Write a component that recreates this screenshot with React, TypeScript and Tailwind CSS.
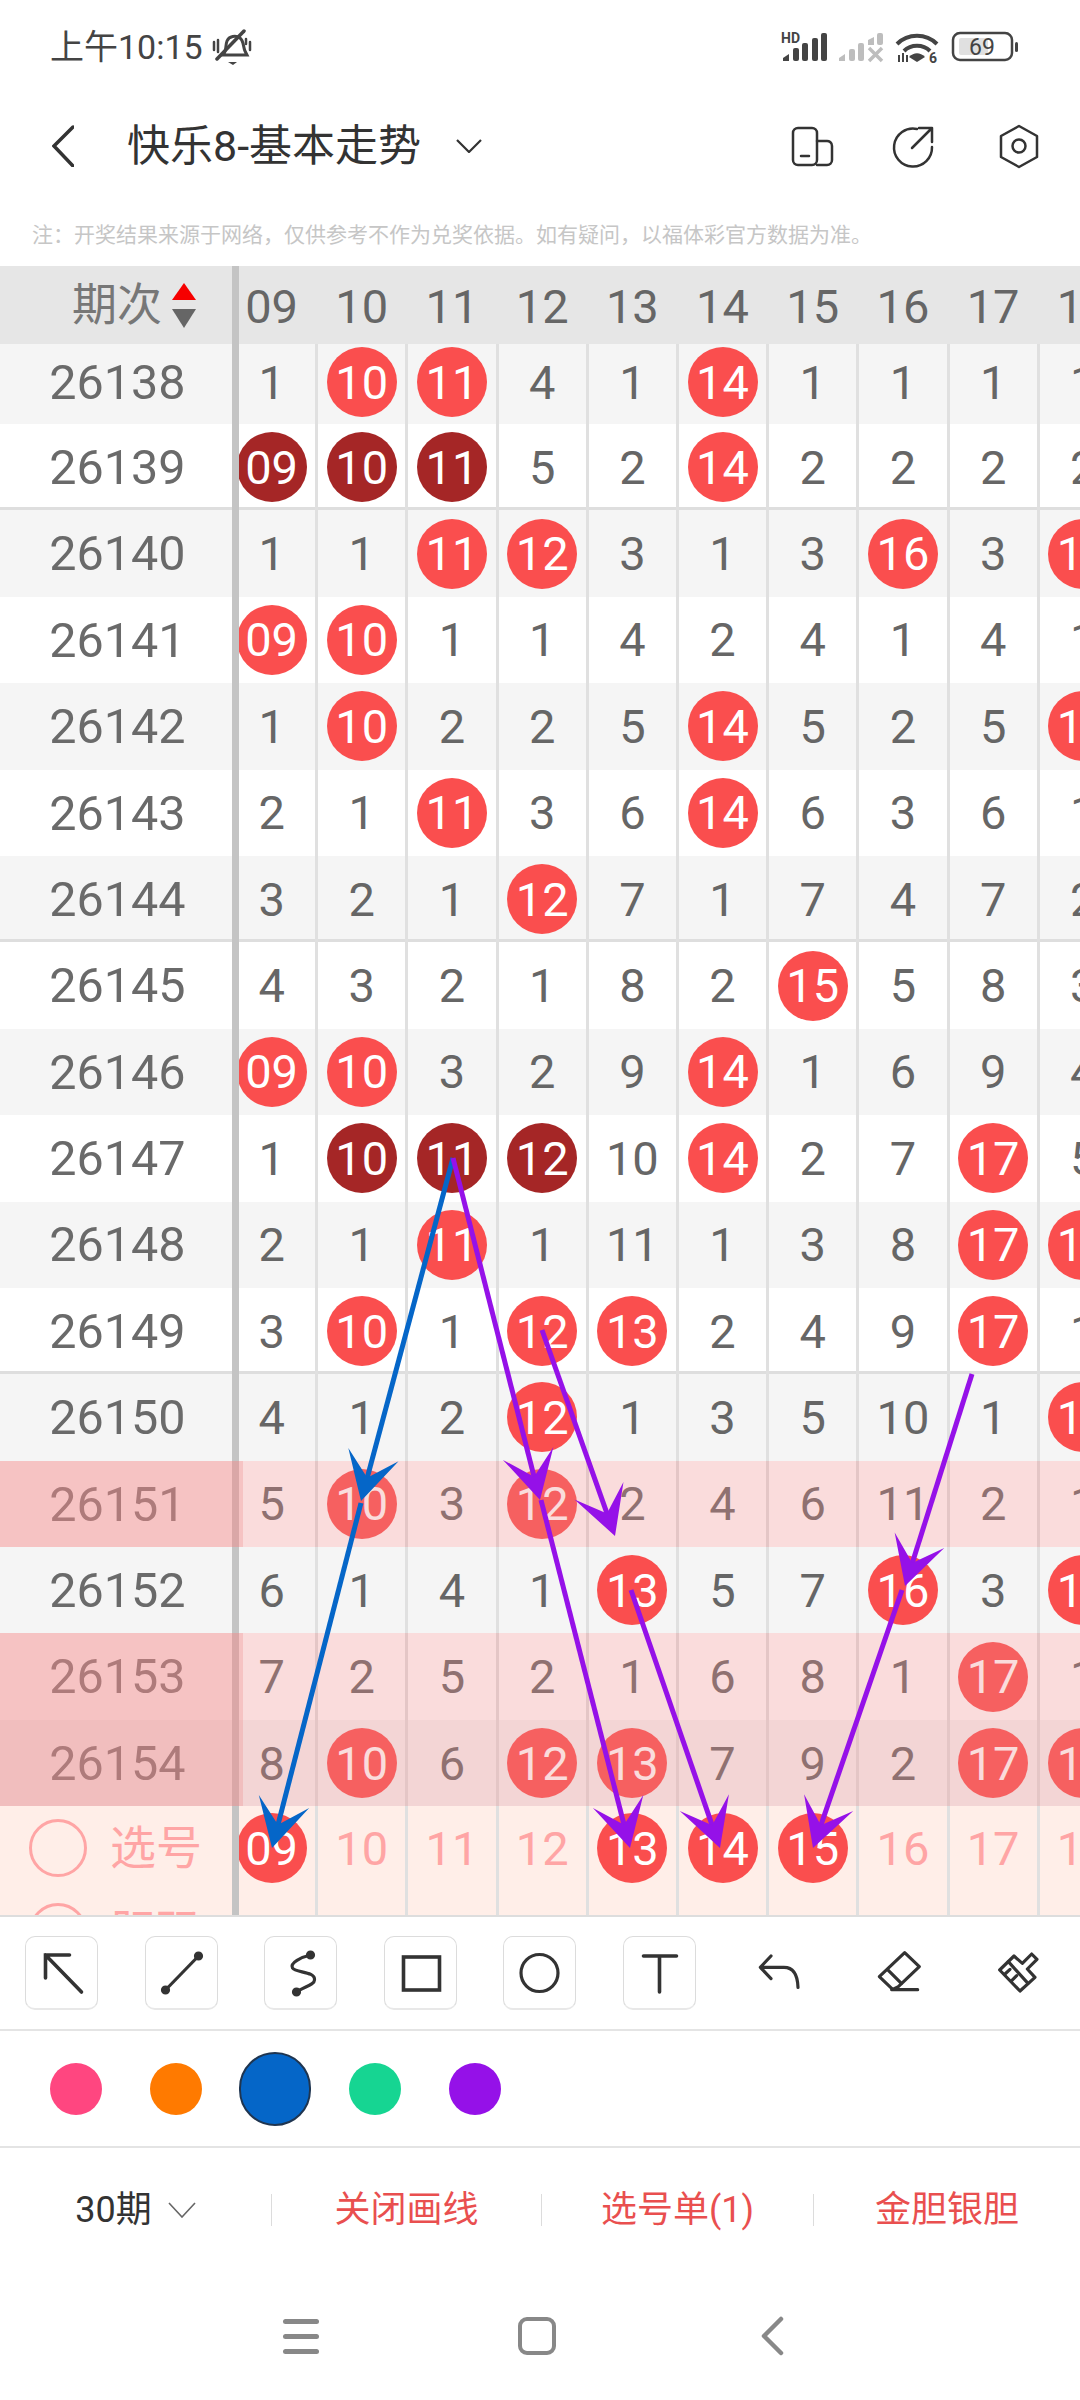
import { Fragment } from 'react'

const COLUMNS = ['09', '10', '11', '12', '13', '14', '15', '16', '17', '18']

// full width colon and comma are written as escapes on purpose
const NOTE = '注\uFF1A开奖结果来源于网络\uFF0C仅供参考不作为兑奖依据。如有疑问\uFF0C以福体彩官方数据为准。'

// b = red ball, d = dark ball (repeat number), plain = missed count
const ROWS = [
  { id: '26138', cells: ['1', 'b10', 'b11', '4', '1', 'b14', '1', '1', '1', '1'] },
  { id: '26139', cells: ['d09', 'd10', 'd11', '5', '2', 'b14', '2', '2', '2', '2'], sep: true },
  { id: '26140', cells: ['1', '1', 'b11', 'b12', '3', '1', '3', 'b16', '3', 'b18'] },
  { id: '26141', cells: ['b09', 'b10', '1', '1', '4', '2', '4', '1', '4', '1'] },
  { id: '26142', cells: ['1', 'b10', '2', '2', '5', 'b14', '5', '2', '5', 'b18'] },
  { id: '26143', cells: ['2', '1', 'b11', '3', '6', 'b14', '6', '3', '6', '1'] },
  { id: '26144', cells: ['3', '2', '1', 'b12', '7', '1', '7', '4', '7', '2'], sep: true },
  { id: '26145', cells: ['4', '3', '2', '1', '8', '2', 'b15', '5', '8', '3'] },
  { id: '26146', cells: ['b09', 'b10', '3', '2', '9', 'b14', '1', '6', '9', '4'] },
  { id: '26147', cells: ['1', 'd10', 'd11', 'd12', '10', 'b14', '2', '7', 'b17', '5'] },
  { id: '26148', cells: ['2', '1', 'b11', '1', '11', '1', '3', '8', 'b17', 'b18'] },
  { id: '26149', cells: ['3', 'b10', '1', 'b12', 'b13', '2', '4', '9', 'b17', '1'], sep: true },
  { id: '26150', cells: ['4', '1', '2', 'b12', '1', '3', '5', '10', '1', 'b18'] },
  { id: '26151', cells: ['5', 'b10', '3', 'b12', '2', '4', '6', '11', '2', '1'], tint: true },
  { id: '26152', cells: ['6', '1', '4', '1', 'b13', '5', '7', 'b16', '3', 'b18'] },
  { id: '26153', cells: ['7', '2', '5', '2', '1', '6', '8', '1', 'b17', '1'], tint: true },
  { id: '26154', cells: ['8', 'b10', '6', 'b12', 'b13', '7', '9', '2', 'b17', 'b18'], tint: true },
]

const PICKED = ['09', '13', '14', '15']

// page coordinates of the hand drawn lines: [fromX, fromY, toX, toY]
const BLUE_LINES = [
  [453, 1158, 361, 1501],
  [361, 1503, 272, 1848],
]
const PURPLE_LINES = [
  [453, 1158, 540, 1500],
  [541, 1500, 630, 1848],
  [542, 1330, 615, 1536],
  [631, 1590, 720, 1848],
  [972, 1374, 905, 1586],
  [902, 1590, 813, 1848],
]

const SWATCHES = [
  { color: 'bg-[#ff4680]', size: 'w-[52px] h-[52px]' },
  { color: 'bg-[#ff7a00]', size: 'w-[52px] h-[52px]' },
  { color: 'bg-[#0566c8] border-2 border-[#1f3550]', size: 'w-[72px] h-[74px]' },
  { color: 'bg-[#16d592]', size: 'w-[52px] h-[52px]' },
  { color: 'bg-[#9511e8]', size: 'w-[52px] h-[52px]' },
]

function Ball({ text, dark }: { text: string; dark?: boolean }) {
  return (
    <span
      className={`flex w-[70px] h-[70px] shrink-0 items-center justify-center rounded-full text-white ${
        dark ? 'bg-[#a52626]' : 'bg-[#fa4e4e]'
      }`}
    >
      {text}
    </span>
  )
}

function Cell({ value }: { value: string }) {
  const kind = value[0]
  return (
    <div className="flex w-[90.2px] h-full shrink-0 items-center justify-center border-r-[3px] border-[#e0e0e0]">
      {kind === 'b' && <Ball text={value.slice(1)} />}
      {kind === 'd' && <Ball text={value.slice(1)} dark />}
      {kind !== 'b' && kind !== 'd' && value}
    </div>
  )
}

function Row({ row, index }: { row: (typeof ROWS)[number]; index: number }) {
  const first = index === 0
  return (
    <div className={`relative overflow-hidden ${first ? 'h-[80px]' : 'h-[86.4px]'}`}>
      <div
        className={`flex h-[86.4px] ${first ? '-mt-[5px]' : ''} ${index % 2 === 0 ? 'bg-[#f5f5f5]' : 'bg-white'} ${
          row.sep ? 'shadow-[inset_0_-3px_0_#dedede]' : ''
        }`}
      >
        <div className="flex w-[239px] shrink-0 items-center justify-center border-r-[7px] border-[#c4c4c4] pl-[3px] pt-[2px] text-[48.5px] text-[#6a6a6a]">
          {row.id}
        </div>
        <div className="flex-1 overflow-hidden">
          <div className="flex h-full -ml-[11px]">
            {row.cells.map((value, i) => (
              <Cell key={i} value={value} />
            ))}
          </div>
        </div>
      </div>
      {row.tint && (
        <>
          <div className="absolute inset-0 bg-[#ee8a8a]/30" />
          <div className="absolute inset-y-0 left-0 w-[243px] bg-[#ee8a8a]/30" />
        </>
      )}
    </div>
  )
}

function Arrow({ line, color }: { line: number[]; color: string }) {
  const [x1, y1, x2, y2] = line
  const len = Math.hypot(x2 - x1, y2 - y1)
  const ux = (x2 - x1) / len
  const uy = (y2 - y1) / len
  const at = (back: number, side: number) => `${x2 - ux * back - uy * side},${y2 - uy * back + ux * side}`
  return (
    <g>
      <line x1={x1} y1={y1} x2={x2 - ux * 20} y2={y2 - uy * 20} stroke={color} strokeWidth={5} />
      <polygon points={`${x2},${y2} ${at(48, 26)} ${at(24, 0)} ${at(48, -26)}`} fill={color} />
    </g>
  )
}

function StatusIcons() {
  return (
    <svg width="340" height="94" viewBox="740 0 340 94" className="shrink-0">
      <text x="781" y="43" fontSize="14" fontWeight="700" fill="#444" fontFamily="Roboto, sans-serif">
        HD
      </text>
      <g fill="#444">
        <path d="M783 61v-3l6-4v7z" />
        <rect x="793" y="48" width="6" height="13" rx="2" />
        <rect x="802" y="43" width="6" height="18" rx="2" />
        <rect x="812" y="38" width="6" height="23" rx="2" />
        <rect x="821" y="33" width="6" height="28" rx="2" />
      </g>
      <g fill="#bdbdbd">
        <path d="M839 61v-3l6-4v7z" />
        <rect x="849" y="49" width="6" height="12" rx="2" />
        <rect x="858" y="43" width="6" height="18" rx="2" />
        <path d="M868 45v-5l6-3v8z" />
        <rect x="877" y="33" width="6" height="12" rx="2" />
        <path d="M869 48l13 13M882 48l-13 13" stroke="#bdbdbd" strokeWidth="3.5" fill="none" />
      </g>
      <g fill="none" stroke="#444" strokeWidth="4">
        <path d="M897 44c11-11 29-11 40 0" />
        <path d="M904 51c7-7 19-7 26 0" />
      </g>
      <path d="M909 57c5-5 11-5 16 0l-8 5z" fill="#444" />
      <path d="M899 55v7M903 53v9M907 55v7" stroke="#444" strokeWidth="2" />
      <text x="929" y="63" fontSize="14" fontWeight="700" fill="#444" fontFamily="Roboto, sans-serif">
        6
      </text>
      <rect x="953" y="33" width="59" height="27" rx="7" fill="none" stroke="#444" strokeWidth="2.5" />
      <rect x="959" y="38" width="29" height="17" rx="2" fill="#e0e0e0" />
      <text x="982" y="55" textAnchor="middle" fontSize="23" fill="#444" fontFamily="Roboto, sans-serif">
        69
      </text>
      <rect x="1015" y="42" width="3" height="10" rx="1.5" fill="#444" />
    </svg>
  )
}

function HeaderIcons() {
  return (
    <svg width="340" height="60" viewBox="740 117 340 60" className="shrink-0">
      <g fill="none" stroke="#333" strokeWidth="2.5" strokeLinecap="round" strokeLinejoin="round">
        <rect x="793" y="129" width="24" height="37" rx="5" />
        <path d="M817 142h9a5 5 0 0 1 6 5v14a5 5 0 0 1-5 5h-10" />
        <path d="M801 157h8" />
        <path d="M917 130A19 19 0 1 0 932 148" />
        <path d="M912 149l20-20M919 129h13v14" />
        <path d="M1019 127l18 10v21l-18 10-18-10v-21z" />
        <circle cx="1019" cy="147" r="6.5" />
      </g>
    </svg>
  )
}

function ToolButton({ children }: { children: React.ReactNode }) {
  return (
    <div className="flex justify-center">
      <div className="w-[73px] h-[74px] rounded-[10px] border border-[#dcdcdc] border-b-2 border-b-[#e8e8e8] bg-white">
        <svg width="71" height="71" viewBox="0 0 70 71" fill="none" stroke="#333" strokeWidth="3.2" strokeLinecap="round">
          {children}
        </svg>
      </div>
    </div>
  )
}

function FreeTool({ box, children }: { box: string; children: React.ReactNode }) {
  return (
    <div className="flex items-center justify-center">
      <svg width="60" height="60" viewBox={box} fill="none" stroke="#333" strokeWidth="9.5" strokeLinecap="round" strokeLinejoin="round">
        {children}
      </svg>
    </div>
  )
}

export default function App() {
  return (
    <div className="relative flex flex-col w-[1080px] h-[2400px] overflow-hidden bg-white font-[Roboto,'Noto_Sans_CJK_SC',sans-serif]">
      {/* Status bar */}
      <div className="flex h-[94px] items-center justify-between">
        <div className="flex items-center pl-[50px] text-[34px] leading-none text-[#444]">
          <span>上午10:15</span>
          <svg width="42" height="36" viewBox="0 0 42 36" className="ml-[8px]">
            <g fill="none" stroke="#444" strokeLinecap="round">
              <path d="M12 26c4-4 2-9 4-14 2-5 9-6 13-3 4 3 3 9 5 13l2 4z" strokeWidth="3" />
              <path d="M6 30L33 2" strokeWidth="3.5" />
              <path d="M3 13v8M7 11v12M39 13v8M35 10v5" strokeWidth="2.5" />
            </g>
            <path d="M17 33h9l-4 3z" fill="#444" />
          </svg>
        </div>
        <StatusIcons />
      </div>

      {/* Title bar */}
      <div className="flex h-[104px] items-center justify-between">
        <div className="flex items-center">
          <svg width="22" height="42" viewBox="0 0 22 42" className="ml-[52px]" fill="none" stroke="#333" strokeWidth="3.5" strokeLinecap="round">
            <path d="M21 2L2 21l19 20" />
          </svg>
          <span className="ml-[53px] text-[43px] leading-none text-[#333]">快乐8-基本走势</span>
          <svg width="26" height="14" viewBox="0 0 26 14" className="ml-[35px]" fill="none" stroke="#333" strokeWidth="2.2">
            <path d="M1 1l12 12L25 1" />
          </svg>
        </div>
        <HeaderIcons />
      </div>

      {/* Note */}
      <div className="h-[68px] pl-[32px] pt-[23px] text-[21px] leading-[28px] text-[#c6c6c6]">{NOTE}</div>

      {/* Trend table */}
      <div className="h-[1651px] shrink-0 overflow-hidden border-b-2 border-[#dddddd] text-[47px] leading-none text-[#666]">
        <div className="flex h-[78px] bg-[#e6e6e6]">
          <div className="flex w-[239px] shrink-0 items-center border-r-[7px] border-[#c4c4c4] pl-[72px] text-[#777]">
            <span className="text-[45px]">期次</span>
            <span className="ml-[10px] flex flex-col gap-[9px]">
              <span className="h-0 w-0 border-x-[12px] border-b-[17px] border-x-transparent border-b-[#f60000]" />
              <span className="h-0 w-0 border-x-[12px] border-t-[19px] border-x-transparent border-t-[#666]" />
            </span>
          </div>
          <div className="flex-1 overflow-hidden">
            <div className="flex h-full -ml-[11px] pt-[2px]">
              {COLUMNS.map((col) => (
                <div key={col} className="flex w-[90.2px] shrink-0 items-center justify-center pr-[3px]">
                  {col}
                </div>
              ))}
            </div>
          </div>
        </div>

        {ROWS.map((row, i) => (
          <Row key={row.id} row={row} index={i} />
        ))}

        {/* Number picking rows, the second one is cut off by the toolbar */}
        {['选号', '胆码'].map((label, r) => (
          <div key={label} className="flex h-[84px] bg-[#ffeee8] text-[#ffa5a5]">
            <div className="flex w-[239px] shrink-0 items-center border-r-[7px] border-[#c4c4c4] pl-[29px]">
              <span className="h-[58px] w-[58px] shrink-0 rounded-full border-[3.5px] border-[#ffa5a5]" />
              <span className="ml-[23px] text-[46px]">{label}</span>
            </div>
            <div className="flex-1 overflow-hidden">
              <div className="flex h-full -ml-[11px]">
                {COLUMNS.map((col) => (
                  <Fragment key={col}>
                    <Cell value={r === 0 && PICKED.includes(col) ? `b${col}` : col} />
                  </Fragment>
                ))}
              </div>
            </div>
          </div>
        ))}
      </div>

      {/* Drawing tools */}
      <div className="grid h-[114px] grid-cols-9 items-center border-b-2 border-[#e4e4e4] px-[2px]">
        <ToolButton>
          <path d="M19 41V18h24M19 18l36 37" strokeWidth="3.6" />
        </ToolButton>
        <ToolButton>
          <path d="M19 53L52 19" />
          <circle cx="19" cy="53" r="3" fill="#333" />
          <circle cx="52" cy="19" r="3" fill="#333" />
        </ToolButton>
        <ToolButton>
          <path d="M45 18C36 20 24 26 27 31C30 36 50 34 49 43C49 48 38 50 31 55" />
          <circle cx="45" cy="18" r="3" fill="#333" />
          <circle cx="31" cy="55" r="3" fill="#333" />
        </ToolButton>
        <ToolButton>
          <rect x="18" y="20" width="36" height="33" strokeWidth="3.6" />
        </ToolButton>
        <ToolButton>
          <circle cx="35" cy="36" r="18.5" />
        </ToolButton>
        <ToolButton>
          <path d="M19 19h33M35 19v36" strokeWidth="3.6" />
        </ToolButton>
        <FreeTool box="60 39 180 180">
          <path d="M126 78L94 112L126 146M94 112H165Q205 112 207 172" />
        </FreeTool>
        <FreeTool box="417 39 180 180">
          <path d="M524 68L568 110L505 170L488 178L448 140Z" />
          <path d="M472 118L514 160M485 179H563" />
        </FreeTool>
        <FreeTool box="777 39 180 180">
          <path d="M855 78L880 100L908 72L924 88L895 117L918 142L873 183L812 120Z" />
          <path d="M838 95L897 160M828 132L843 118M848 152L863 137" />
        </FreeTool>
      </div>

      {/* Pen colours */}
      <div className="flex h-[117px] items-center border-b-2 border-[#e4e4e4] pl-[26px]">
        {SWATCHES.map((swatch) => (
          <div key={swatch.color} className="flex w-[99.7px] shrink-0 justify-center">
            <span className={`block rounded-full ${swatch.color} ${swatch.size}`} />
          </div>
        ))}
      </div>

      {/* Bottom actions */}
      <div className="flex h-[124px] items-center text-[36px] leading-none text-[#e94f4f]">
        <div className="flex w-[271px] items-center justify-center text-[#333]">
          <span>30期</span>
          <svg width="28" height="16" viewBox="0 0 28 16" className="ml-[16px]" fill="none" stroke="#666" strokeWidth="1.6">
            <path d="M1 1l13 14L27 1" />
          </svg>
        </div>
        <div className="h-[32px] w-px bg-[#dcdcdc]" />
        <div className="w-[269px] text-center">关闭画线</div>
        <div className="h-[32px] w-px bg-[#dcdcdc]" />
        <div className="w-[271px] text-center">选号单(1)</div>
        <div className="h-[32px] w-px bg-[#dcdcdc]" />
        <div className="flex-1 text-center">金胆银胆</div>
      </div>

      {/* Navigation bar */}
      <div className="flex flex-1 items-center pl-[283px]">
        <div className="flex w-[36px] flex-col gap-[10px]">
          <span className="h-[5px] rounded-full bg-[#888]" />
          <span className="h-[5px] rounded-full bg-[#888]" />
          <span className="h-[5px] rounded-full bg-[#888]" />
        </div>
        <div className="ml-[199px] h-[38px] w-[38px] rounded-[9px] border-[4.5px] border-[#888]" />
        <svg width="24" height="40" viewBox="0 0 24 40" className="ml-[204px]" fill="none" stroke="#888" strokeWidth="4.5" strokeLinecap="round" strokeLinejoin="round">
          <path d="M21 3L4 20l17 17" />
        </svg>
      </div>

      {/* Lines the user drew on top of the table */}
      <svg className="pointer-events-none absolute left-0 top-0" width="1080" height="1917" viewBox="0 0 1080 1917">
        {BLUE_LINES.map((line, i) => (
          <Arrow key={i} line={line} color="#0566c8" />
        ))}
        {PURPLE_LINES.map((line, i) => (
          <Arrow key={i} line={line} color="#9511e8" />
        ))}
      </svg>
    </div>
  )
}
